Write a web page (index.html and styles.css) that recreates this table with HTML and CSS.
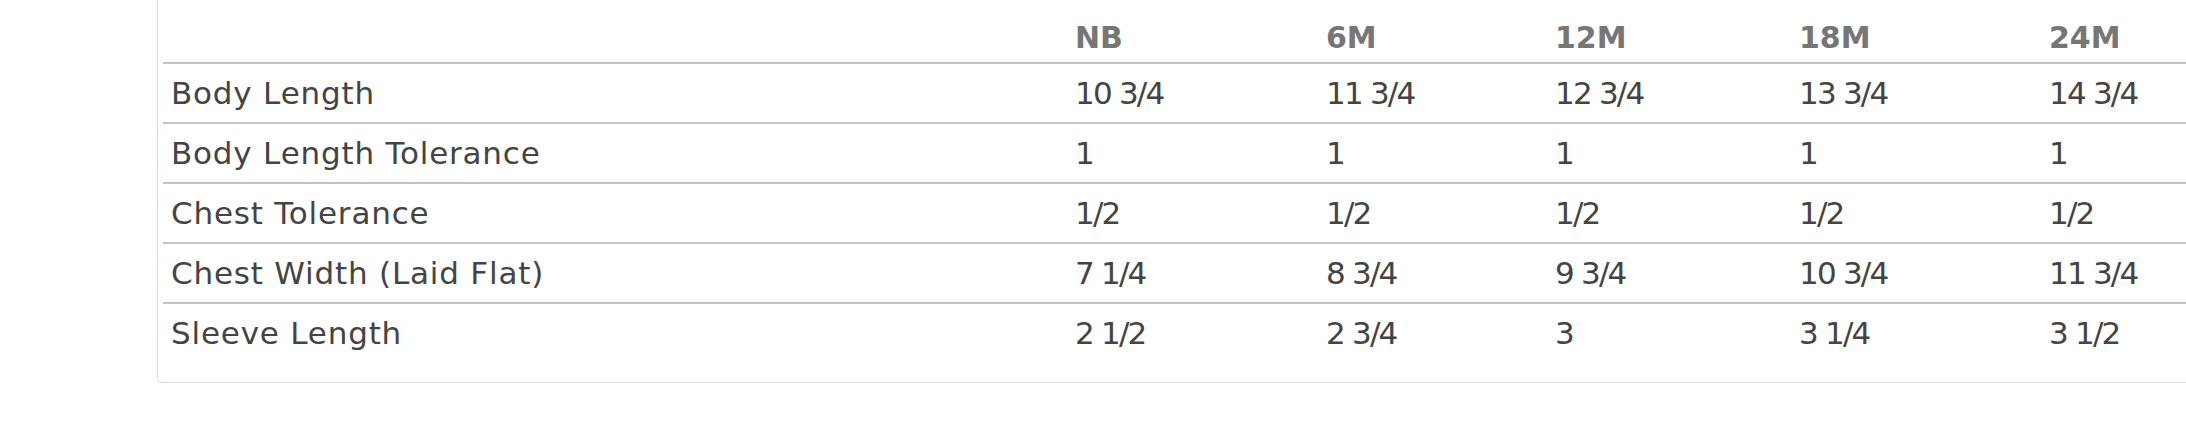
FILE: index.html
```html
<!DOCTYPE html>
<html lang="en">
<head>
<meta charset="utf-8">
<title>Size Chart</title>
<link rel="stylesheet" href="styles.css">
</head>
<body>
<div class="wrap">
  <div class="card">
    <table class="size-table">
      <colgroup>
        <col class="c-label">
        <col class="c-nb">
        <col class="c-6m">
        <col class="c-12m">
        <col class="c-18m">
        <col class="c-24m">
      </colgroup>
      <thead>
        <tr>
          <th></th>
          <th>NB</th>
          <th>6M</th>
          <th>12M</th>
          <th>18M</th>
          <th>24M</th>
        </tr>
      </thead>
      <tbody>
        <tr>
          <td class="label">Body Length</td>
          <td class="num">10 3/4</td>
          <td class="num">11 3/4</td>
          <td class="num">12 3/4</td>
          <td class="num">13 3/4</td>
          <td class="num">14 3/4</td>
        </tr>
        <tr>
          <td class="label">Body Length Tolerance</td>
          <td class="num">1</td>
          <td class="num">1</td>
          <td class="num">1</td>
          <td class="num">1</td>
          <td class="num">1</td>
        </tr>
        <tr>
          <td class="label">Chest Tolerance</td>
          <td class="num">1/2</td>
          <td class="num">1/2</td>
          <td class="num">1/2</td>
          <td class="num">1/2</td>
          <td class="num">1/2</td>
        </tr>
        <tr>
          <td class="label">Chest Width (Laid Flat)</td>
          <td class="num">7 1/4</td>
          <td class="num">8 3/4</td>
          <td class="num">9 3/4</td>
          <td class="num">10 3/4</td>
          <td class="num">11 3/4</td>
        </tr>
        <tr>
          <td class="label">Sleeve Length</td>
          <td class="num">2 1/2</td>
          <td class="num">2 3/4</td>
          <td class="num">3</td>
          <td class="num">3 1/4</td>
          <td class="num">3 1/2</td>
        </tr>
      </tbody>
    </table>
  </div>
</div>
</body>
</html>
```

FILE: styles.css
```css
html, body {
  margin: 0;
  padding: 0;
  background: #ffffff;
  overflow: hidden;
}

.wrap {
  padding-left: 157px;
  width: 2400px;
}

.card {
  margin-top: -37px;
  border: 1px solid #dcdcdc;
  border-radius: 4px;
  padding: 0 0 20px 5px;
  width: 2300px;
}

.size-table {
  border-collapse: separate;
  border-spacing: 0;
  table-layout: fixed;
  width: 2129px;
  font-family: "DejaVu Sans", "Open Sans", sans-serif;
  color: #444444;
}

.c-label { width: 904px; }
.c-nb { width: 251px; }
.c-6m { width: 229px; }
.c-12m { width: 244px; }
.c-18m { width: 250px; }
.c-24m { width: 251px; }

.size-table th {
  height: 100px;
  vertical-align: bottom;
  text-align: left;
  padding: 0 8px 4px;
  line-height: 40px;
  font-size: 30px;
  font-weight: bold;
  color: #767676;
  border-bottom: 2px solid #c4c4c4;
  box-sizing: border-box;
  white-space: nowrap;
}

.size-table td {
  height: 60px;
  padding: 0 8px;
  vertical-align: middle;
  font-size: 31px;
  line-height: 40px;
  border-bottom: 2px solid #c4c4c4;
  box-sizing: border-box;
  white-space: nowrap;
}

.size-table tbody tr:last-child td {
  border-bottom: none;
  height: 58px;
}

.label {
  letter-spacing: 0.8px;
}

.num {
  letter-spacing: -1.8px;
}
```
